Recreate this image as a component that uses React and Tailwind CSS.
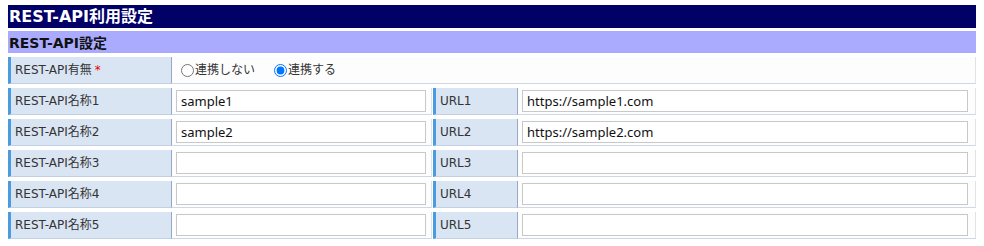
import { useState } from "react";

const font = { fontFamily: '"DejaVu Sans", "Noto Sans CJK JP", sans-serif' };
const inputFont = { fontFamily: '"Noto Sans", "Noto Sans CJK JP", sans-serif' };

const rows = [
  { name: "sample1", url: "https://sample1.com" },
  { name: "sample2", url: "https://sample2.com" },
  { name: "", url: "" },
  { name: "", url: "" },
  { name: "", url: "" },
];

function Label({ children, className = "" }) {
  return (
    <div
      className={
        "flex items-center pl-[4px] bg-[#dae5f4] border-l-[3px] border-l-[#4a9be0] border-r border-r-[#97a9c9] border-b border-b-[#c3cfe2] text-[12px] text-[#333] " +
        className
      }
    >
      {children}
    </div>
  );
}

function Value({ children, className = "" }) {
  return (
    <div
      className={
        "flex items-center pl-[4px] bg-[#fdfdfd] border-r border-r-[#e2e2e2] border-b border-b-[#d0d7e4] " +
        className
      }
    >
      {children}
    </div>
  );
}

export default function App() {
  const [linked, setLinked] = useState("on");
  const [data, setData] = useState(rows);

  const update = (i, key, v) =>
    setData((d) => d.map((r, j) => (j === i ? { ...r, [key]: v } : r)));

  return (
    <div className="bg-white px-2 pt-[5px] w-[984px] h-[246px]" style={font}>
      <div className="h-[23px] bg-[#000066] text-white font-bold text-[16px] leading-[24px] pl-[1px]">
        REST-API利用設定
      </div>
      <div className="mt-[3px] h-[22px] bg-[#aaabff] text-[#111] font-bold text-[14px] leading-[24px] pl-[1px]">
        REST-API設定
      </div>

      <div className="mt-[4px] flex h-[27px]">
        <Label className="w-[164px]">
          REST-API有無<span className="text-[#e00] ml-[3px]">*</span>
        </Label>
        <Value className="flex-1 pl-[9px] pr-[4px] gap-[19px] text-[12px] text-[#333]">
          <label className="flex items-center gap-[1px]">
            <input
              type="radio"
              name="link"
              className="m-0 w-[13px] h-[13px]"
              checked={linked === "off"}
              onChange={() => setLinked("off")}
            />
            連携しない
          </label>
          <label className="flex items-center gap-[1px]">
            <input
              type="radio"
              name="link"
              className="m-0 w-[13px] h-[13px]"
              checked={linked === "on"}
              onChange={() => setLinked("on")}
            />
            連携する
          </label>
        </Value>
      </div>

      {data.map((r, i) => (
        <div key={i} className="mt-[4px] flex h-[27px]">
          <Label className="w-[164px]">REST-API名称{i + 1}</Label>
          <Value className="w-[260px] pr-[5px]">
            <input
              type="text"
              value={r.name}
              onChange={(e) => update(i, "name", e.target.value)}
              style={inputFont}
              className="w-full h-[22px] border border-[#c8c8c8] bg-white px-[4px] text-[13px] text-[#111] outline-none"
            />
          </Value>
          <Label className="w-[85px] ml-[1px]">URL{i + 1}</Label>
          <Value className="flex-1 pr-[7px]">
            <input
              type="text"
              value={r.url}
              onChange={(e) => update(i, "url", e.target.value)}
              style={inputFont}
              className="w-full h-[22px] border border-[#c8c8c8] bg-white px-[4px] text-[13px] text-[#111] outline-none"
            />
          </Value>
        </div>
      ))}
    </div>
  );
}
